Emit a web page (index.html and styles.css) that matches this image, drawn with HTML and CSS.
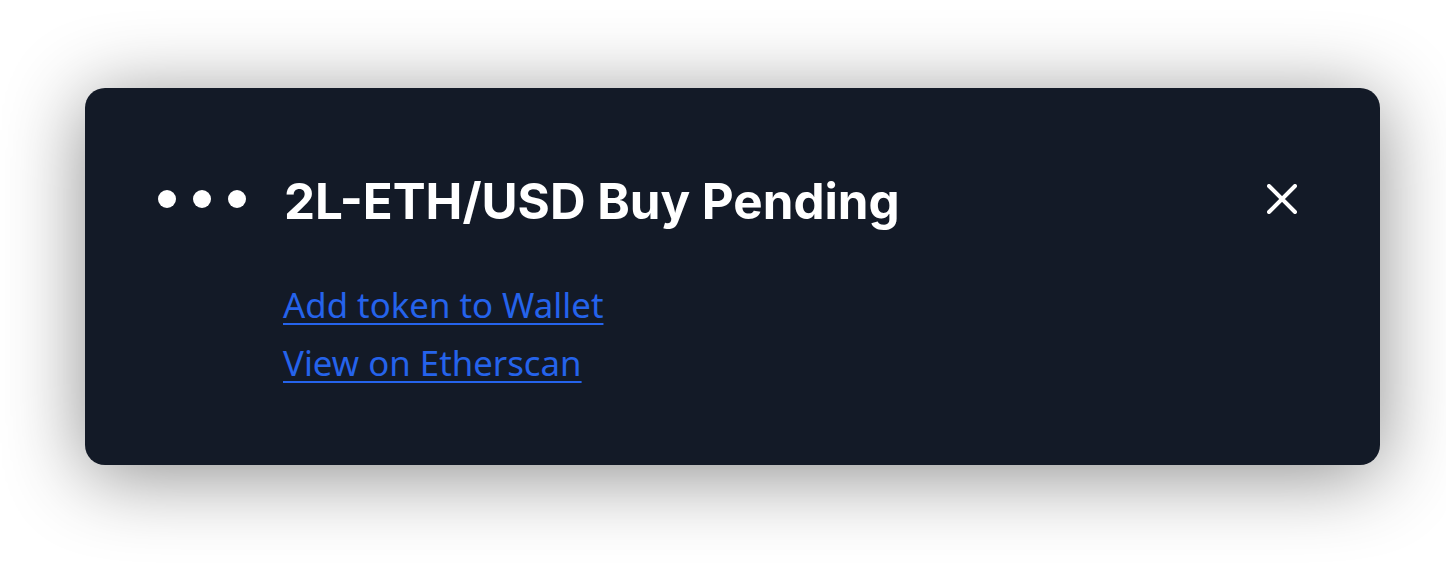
FILE: index.html
```html
<!DOCTYPE html>
<html lang="en">
<head>
<meta charset="utf-8">
<title>Toast</title>
<link rel="stylesheet" href="styles.css">
</head>
<body>
  <div class="toast">
    <div class="toast-header">
      <div class="dots">
        <span class="dot"></span>
        <span class="dot"></span>
        <span class="dot"></span>
      </div>
      <h1 class="title">2L-ETH/USD Buy Pending</h1>
      <button class="close" aria-label="Close">
        <svg width="30" height="30" viewBox="0 0 30 30">
          <path d="M2 2 L28 28 M28 2 L2 28" stroke="#ffffff" stroke-width="4" stroke-linecap="round" fill="none"/>
        </svg>
      </button>
    </div>
    <div class="links">
      <a class="link" href="#">Add token to Wallet</a>
      <a class="link" href="#">View on Etherscan</a>
    </div>
  </div>
</body>
</html>
```
FILE: styles.css
```css
html, body {
  margin: 0;
  padding: 0;
  background: #ffffff;
}

body {
  width: 1446px;
  height: 564px;
  overflow: hidden;
  padding: 88px 0 0 85px;
  box-sizing: border-box;
}

.toast {
  width: 1295px;
  height: 377px;
  box-sizing: border-box;
  padding: 88px 78px 0 73px;
  background: #131a27;
  border-radius: 20px;
  box-shadow: 0 10px 80px rgba(0, 0, 0, 0.45);
}

.toast-header {
  display: flex;
  align-items: center;
  height: 46px;
}

.dots {
  display: flex;
  gap: 17px;
}

.dot {
  width: 18px;
  height: 18px;
  border-radius: 50%;
  background: #ffffff;
}

.title {
  flex: 1;
  margin: 0 0 0 38px;
  padding-top: 3px;
  font-family: Inter, "Noto Sans", sans-serif;
  font-weight: 700;
  font-size: 49.3px;
  line-height: 46px;
  color: #ffffff;
}

.close {
  width: 40px;
  height: 40px;
  padding: 0;
  border: 0;
  background: transparent;
  display: flex;
  align-items: center;
  justify-content: center;
}

.links {
  display: flex;
  flex-direction: column;
  align-items: flex-start;
  margin: 54px 0 0 125px;
}

.link {
  font-family: "Noto Sans", sans-serif;
  font-size: 34.8px;
  line-height: 58px;
  color: #2563eb;
  text-decoration: underline;
  text-decoration-thickness: 2px;
  text-underline-offset: 5px;
}
```
